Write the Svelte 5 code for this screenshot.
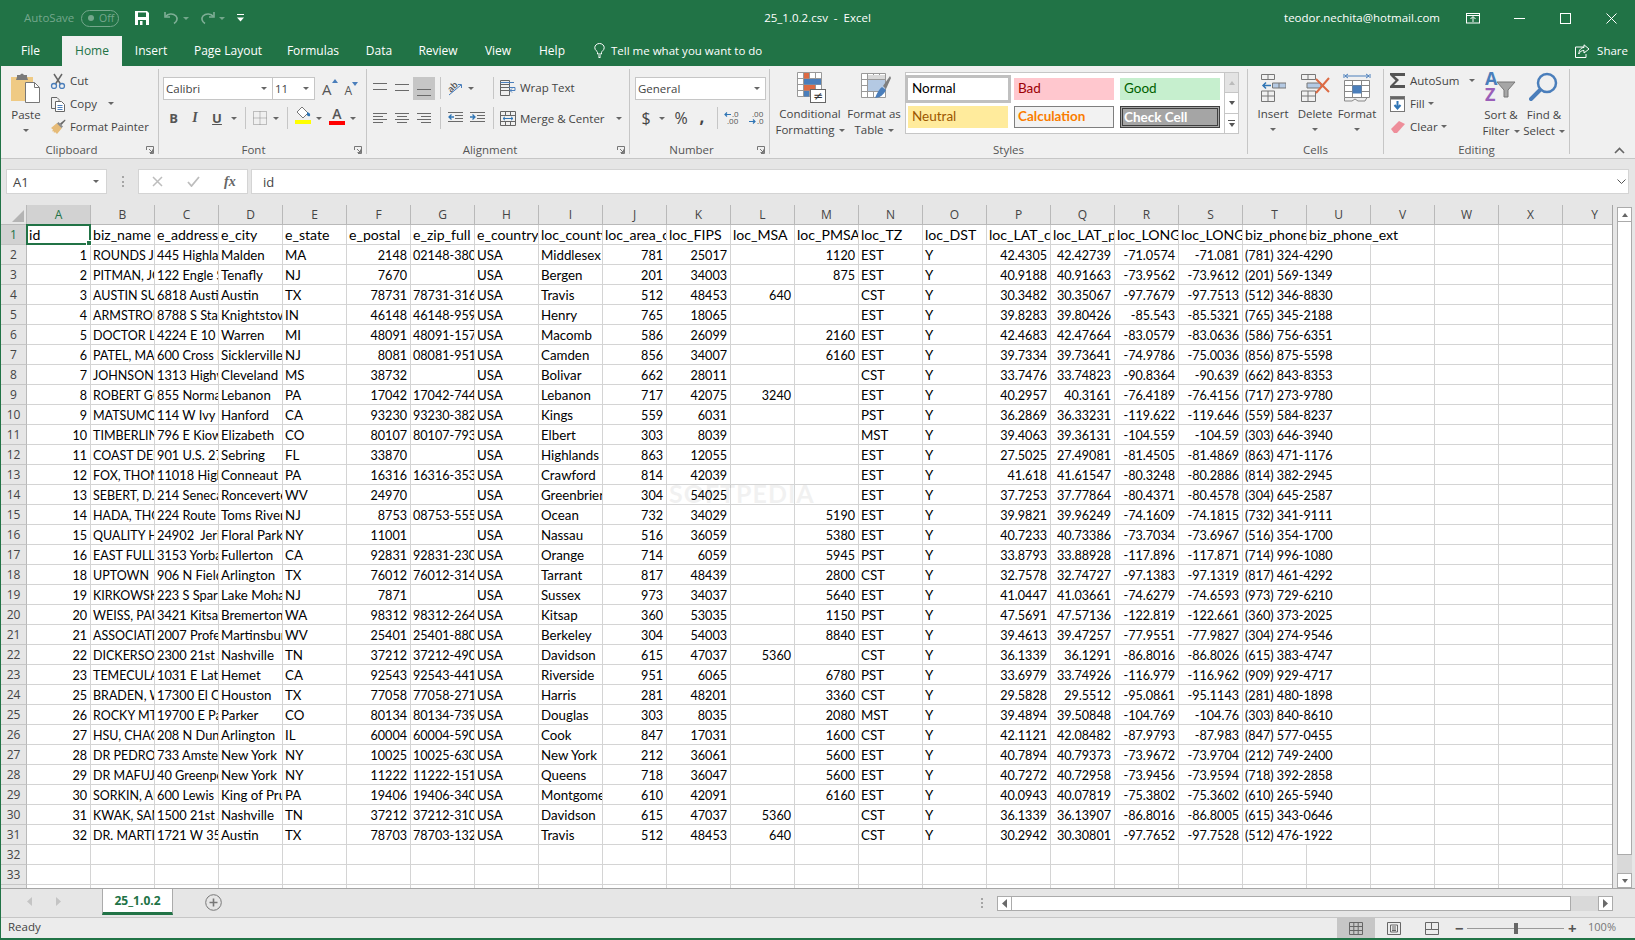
<script>
const tabs = [
  { l: 'File', w: 61, first: true }, { l: 'Home', w: 60, on: true }, { l: 'Insert', w: 58 }, { l: 'Page Layout', w: 96 },
  { l: 'Formulas', w: 74 }, { l: 'Data', w: 58 }, { l: 'Review', w: 60 }, { l: 'View', w: 60 }, { l: 'Help', w: 48 }
];
const letters = 'ABCDEFGHIJKLMNOPQRSTUVWXY'.split('');
const head = 'id|biz_name|e_address|e_city|e_state|e_postal|e_zip_full|e_country|loc_county|loc_area_code|loc_FIPS|loc_MSA|loc_PMSA|loc_TZ|loc_DST|loc_LAT_centroid|loc_LAT_poly|loc_LONG_centroid|loc_LONG_poly|biz_phone|biz_phone_ext'.split('|');
const raw = `1|ROUNDS JOHN|445 Highland|Malden|MA|2148|02148-3809|USA|Middlesex County|781|25017||1120|EST|Y|42.4305|42.42739|-71.0574|-71.081|(781) 324-4290
2|PITMAN, JOHN|122 Engle St|Tenafly|NJ|7670||USA|Bergen|201|34003||875|EST|Y|40.9188|40.91663|-73.9562|-73.9612|(201) 569-1349
3|AUSTIN SURGERY|6818 Austin Ctr|Austin|TX|78731|78731-3162|USA|Travis|512|48453|640||CST|Y|30.3482|30.35067|-97.7679|-97.7513|(512) 346-8830
4|ARMSTRONG|8788 S State Rd|Knightstown|IN|46148|46148-9590|USA|Henry|765|18065|||EST|Y|39.8283|39.80426|-85.543|-85.5321|(765) 345-2188
5|DOCTOR LEE|4224 E 10 Mile|Warren|MI|48091|48091-1572|USA|Macomb|586|26099||2160|EST|Y|42.4683|42.47664|-83.0579|-83.0636|(586) 756-6351
6|PATEL, MAHESH|600 Cross Keys|Sicklerville NJ|NJ|8081|08081-9514|USA|Camden|856|34007||6160|EST|Y|39.7334|39.73641|-74.9786|-75.0036|(856) 875-5598
7|JOHNSON EYE|1313 Highway|Cleveland|MS|38732||USA|Bolivar|662|28011|||CST|Y|33.7476|33.74823|-90.8364|-90.639|(662) 843-8353
8|ROBERT GOLD|855 Norman Dr|Lebanon|PA|17042|17042-7449|USA|Lebanon|717|42075|3240||EST|Y|40.2957|40.3161|-76.4189|-76.4156|(717) 273-9780
9|MATSUMOTO|114 W Ivy|Hanford|CA|93230|93230-3821|USA|Kings|559|6031|||PST|Y|36.2869|36.33231|-119.622|-119.646|(559) 584-8237
10|TIMBERLINE|796 E Kiowa|Elizabeth|CO|80107|80107-7930|USA|Elbert|303|8039|||MST|Y|39.4063|39.36131|-104.559|-104.59|(303) 646-3940
11|COAST DENTAL|901 U.S. 27 N|Sebring|FL|33870||USA|Highlands|863|12055|||EST|Y|27.5025|27.49081|-81.4505|-81.4869|(863) 471-1176
12|FOX, THOMAS|11018 Highland|Conneaut|PA|16316|16316-3531|USA|Crawford|814|42039|||EST|Y|41.618|41.61547|-80.3248|-80.2886|(814) 382-2945
13|SEBERT, D.W.|214 Seneca Tr|Ronceverte|WV|24970||USA|Greenbrier County|304|54025|||EST|Y|37.7253|37.77864|-80.4371|-80.4578|(304) 645-2587
14|HADA, THOMAS|224 Route 37|Toms River|NJ|8753|08753-5551|USA|Ocean|732|34029||5190|EST|Y|39.9821|39.96249|-74.1609|-74.1815|(732) 341-9111
15|QUALITY HOME|24902  Jericho|Floral Park|NY|11001||USA|Nassau|516|36059||5380|EST|Y|40.7233|40.73386|-73.7034|-73.6967|(516) 354-1700
16|EAST FULLERTON|3153 Yorba Rd|Fullerton|CA|92831|92831-2301|USA|Orange|714|6059||5945|PST|Y|33.8793|33.88928|-117.896|-117.871|(714) 996-1080
18|UPTOWN|906 N Field St|Arlington|TX|76012|76012-3140|USA|Tarrant|817|48439||2800|CST|Y|32.7578|32.74727|-97.1383|-97.1319|(817) 461-4292
19|KIRKOWSKI|223 S Sparta|Lake Mohawk|NJ|7871||USA|Sussex|973|34037||5640|EST|Y|41.0447|41.03661|-74.6279|-74.6593|(973) 729-6210
20|WEISS, PAUL|3421 Kitsap Way|Bremerton|WA|98312|98312-2645|USA|Kitsap|360|53035||1150|PST|Y|47.5691|47.57136|-122.819|-122.661|(360) 373-2025
21|ASSOCIATES|2007 Professional|Martinsburg|WV|25401|25401-8806|USA|Berkeley|304|54003||8840|EST|Y|39.4613|39.47257|-77.9551|-77.9827|(304) 274-9546
22|DICKERSON|2300 21st Ave|Nashville|TN|37212|37212-4901|USA|Davidson|615|47037|5360||CST|Y|36.1339|36.1291|-86.8016|-86.8026|(615) 383-4747
23|TEMECULA|1031 E Latham|Hemet|CA|92543|92543-4412|USA|Riverside|951|6065||6780|PST|Y|33.6979|33.74926|-116.979|-116.962|(909) 929-4717
25|BRADEN, WILL|17300 El Camino|Houston|TX|77058|77058-2710|USA|Harris|281|48201||3360|CST|Y|29.5828|29.5512|-95.0861|-95.1143|(281) 480-1898
26|ROCKY MTN|19700 E Parker|Parker|CO|80134|80134-7390|USA|Douglas|303|8035||2080|MST|Y|39.4894|39.50848|-104.769|-104.76|(303) 840-8610
27|HSU, CHAO|208 N Dunton|Arlington|IL|60004|60004-5901|USA|Cook|847|17031||1600|CST|Y|42.1121|42.08482|-87.9793|-87.983|(847) 577-0455
28|DR PEDRO|733 Amsterdam|New York|NY|10025|10025-6301|USA|New York|212|36061||5600|EST|Y|40.7894|40.79373|-73.9672|-73.9704|(212) 749-2400
29|DR MAFUJ|40 Greenpoint|New York|NY|11222|11222-1512|USA|Queens|718|36047||5600|EST|Y|40.7272|40.72958|-73.9456|-73.9594|(718) 392-2858
30|SORKIN, ALAN|600 Lewis Rd|King of Prussia|PA|19406|19406-3401|USA|Montgomery|610|42091||6160|EST|Y|40.0943|40.07819|-75.3802|-75.3602|(610) 265-5940
31|KWAK, SAMUEL|1500 21st Ave|Nashville|TN|37212|37212-3101|USA|Davidson|615|47037|5360||CST|Y|36.1339|36.13907|-86.8016|-86.8005|(615) 343-0646
32|DR. MARTIN|1721 W 35th St|Austin|TX|78703|78703-1321|USA|Travis|512|48453|640||CST|Y|30.2942|30.30801|-97.7652|-97.7528|(512) 476-1922`;
const rightCols = new Set([0, 5, 9, 10, 11, 12, 15, 16, 17, 18]);
const sizeCls = (i) => (i === 1 ? 'caps' : i === 2 ? 'mix' : i === 6 || i === 19 || rightCols.has(i) ? 'digits' : '');
const dataRows = raw.split('\n').map((s) => s.split('|'));
function fill(cells) {
  while (cells.length < 25) cells.push({ t: '', cls: '' });
  return cells;
}
const rows = [];
{
  const c = head.map((t, i) => ({ t, cls: 'hd' + (i === 20 ? ' span2' : '') }));
  c.push({ t: '', cls: '' }, { t: '', cls: '' }, { t: '', cls: '' });
  rows.push(c);
}
for (const r of dataRows) {
  const c = r.map((t, i) => ({ t, cls: sizeCls(i) + (rightCols.has(i) ? ' num' : '') + (i === 19 ? ' span2' : '') }));
  c.push({ t: '', cls: '' }, { t: '', cls: '' }, { t: '', cls: '' }, { t: '', cls: '' });
  rows.push(c);
}
for (let i = 0; i < 3; i++) rows.push(fill([]));
</script>

<div class="app">
  <header class="title">
    <div class="qat">
      <span class="autosave">AutoSave</span>
      <span class="toggle"><i></i><b>Off</b></span>
      <svg class="save" width="14" height="14" viewBox="0 0 14 14"><path d="M0 0H12L14 2V14H0Z" fill="#fff"/><rect x="3" y="1.5" width="8" height="4.5" fill="#217346"/><rect x="3" y="9" width="8" height="5" fill="#217346"/><rect x="5" y="10" width="2.5" height="4" fill="#fff"/></svg>
      <svg class="undo" width="15" height="14" viewBox="0 0 15 14" fill="none" stroke="#7fae96" stroke-width="1.6"><path d="M1 1V6H6"/><path d="M1.5 5.5C4 2.5 9 2 12 5C14 7.5 13 10.5 10 12.5"/></svg>
      <span class="dd dim"></span>
      <svg class="redo" width="15" height="14" viewBox="0 0 15 14" fill="none" stroke="#7fae96" stroke-width="1.6"><path d="M14 1V6H9"/><path d="M13.5 5.5C11 2.5 6 2 3 5C1 7.5 2 10.5 5 12.5"/></svg>
      <span class="dd dim"></span>
      <svg class="cust" width="7" height="8" viewBox="0 0 7 8"><rect width="7" height="1" fill="#fff"/><path d="M0 3.5H7L3.5 7.5Z" fill="#fff"/></svg>
    </div>
    <div class="doc">25_1.0.2.csv &nbsp;-&nbsp; Excel</div>
    <div class="winbox">
      <span class="email">teodor.nechita@hotmail.com</span>
      <span class="wb"><svg width="14" height="11" viewBox="0 0 14 11" fill="none" stroke="#fff"><rect x=".5" y=".5" width="13" height="9.5"/><path d="M.5 2.5H13.5M7 9V4M4.5 6L7 3.5L9.5 6"/></svg></span>
      <span class="wb"><svg width="11" height="1" viewBox="0 0 11 1"><rect width="11" height="1" fill="#fff"/></svg></span>
      <span class="wb"><svg width="11" height="11" viewBox="0 0 11 11" fill="none" stroke="#fff"><rect x=".5" y=".5" width="10" height="10"/></svg></span>
      <span class="wb"><svg width="11" height="11" viewBox="0 0 11 11" fill="none" stroke="#fff"><path d="M.5 .5L10.5 10.5M10.5 .5L.5 10.5"/></svg></span>
    </div>
  </header>

  <nav class="tabs">
    {#each tabs as t}
      <span class="tab" class:on={t.on} class:first={t.first} style="width:{t.w}px">{t.l}</span>
    {/each}
    <svg class="bulb" width="11" height="15" viewBox="0 0 11 15" fill="none" stroke="#fff"><path d="M3.5 11V9.5C3.5 8 .8 7.5 .8 4.7A4.7 4.2 0 0 1 10.2 4.7C10.2 7.5 7.5 8 7.5 9.5V11ZM4 13H7M4.5 14.5H6.5"/></svg>
    <span class="tell">Tell me what you want to do</span>
    <span class="share">
      <svg width="15" height="14" viewBox="0 0 15 14" fill="none" stroke="#fff"><path d="M9 3H.5V13.5H11V10"/><path d="M9 .8L14 5L9 9V6.5C6.5 6.5 5 7.5 3.8 10C4 6 6 3.5 9 3.5Z"/></svg>
      <span>Share</span>
    </span>
  </nav>

  <section class="ribbon">
    <!-- Clipboard -->
    <div class="group clip">
      <div class="body hflex">
        <div class="big paste">
          <svg width="29" height="30" viewBox="0 0 29 30"><rect x="0" y="4" width="22" height="24" fill="#efca84"/><path d="M6 4V2H9Q11 -1 13 2H16V4L17 7H5Z" fill="#7a7a7a"/><path d="M14.500 9.500H23.500L28.500 14.500V29.500H14.500Z" fill="#fff" stroke="#777"/><path d="M23.500 9.500V14.500H28.500" fill="none" stroke="#777"/></svg>
          <span class="lbl">Paste</span>
          <span class="dd"></span>
        </div>
        <div class="stack cstack">
          <div class="sm"><svg width="16" height="16" viewBox="0 0 16 16" fill="none"><path d="M4 1L10.500 11M12 1L5.500 11" stroke="#666" stroke-width="1.500"/><circle cx="4" cy="13" r="2.500" stroke="#4a7ebb" stroke-width="1.300"/><circle cx="12" cy="13" r="2.500" stroke="#4a7ebb" stroke-width="1.300"/></svg><span>Cut</span></div>
          <div class="sm"><svg width="16" height="16" viewBox="0 0 16 16" fill="none" stroke="#666"><path d="M1.500 1.500H7L9 3.500V5M5 12.500H1.500V1.500" /><path d="M5.500 5.500H11.500L14.500 8.500V15.500H5.500Z" fill="#fff"/><path d="M7.500 9.500H12.500M7.500 11.500H12.500M7.500 13.500H12.500" stroke="#4a7ebb"/></svg><span>Copy</span><span class="dd mlc"></span></div>
          <div class="sm"><svg width="16" height="16" viewBox="0 0 16 16"><path d="M1 9L7 4L12 9L7 15L5 13L4 14L3.500 12L2 12.500L3 10.500Z" fill="#e6bb78"/><path d="M7 4.500L11.500 9L13 7.500L8.500 3Z" fill="#8a8a8a"/><path d="M10 4.500L15 0.500L15.500 1.500L11.500 6Z" fill="#666"/></svg><span class="fp">Format Painter</span></div>
        </div>
      </div>
      <div class="glabel lc">Clipboard<svg class="launch" width="8" height="8" viewBox="0 0 8 8" fill="none" stroke="#777"><path d="M.5 4V.5H7.500V7.500H4M3 3L6.500 6.500M6.500 3.500V6.500H3.500"/></svg></div>
    </div>

    <!-- Font -->
    <div class="group font">
      <div class="body">
        <div class="r1">
          <div class="combo cfont"><span>Calibri</span><span class="dd"></span></div>
          <div class="combo csize"><span>11</span><span class="dd"></span></div>
          <span class="grow">A<svg width="6" height="4" viewBox="0 0 6 4"><path d="M0 4L3 0L6 4Z" fill="#4a7ebb"/></svg></span>
          <span class="shrink">A<svg width="6" height="4" viewBox="0 0 6 4"><path d="M0 0L3 4L6 0Z" fill="#4a7ebb"/></svg></span>
        </div>
        <div class="r2">
          <span class="ib w21 bb">B</span><span class="ib w22 ii">I</span><span class="ib w22 uu">U</span><span class="ib w12"><span class="dd"></span></span>
          <span class="vsep s5"></span>
          <span class="ib w20 ml4"><svg width="14" height="14" viewBox="0 0 14 14" fill="none" stroke="#8a8a8a" stroke-dasharray="1 1"><path d="M.5 .5H13.500V13.500H.5ZM7 .5V13.500M.5 7H13.500"/></svg></span><span class="ib w12"><span class="dd"></span></span>
          <span class="vsep s5"></span>
          <span class="ib w20 ml5 col"><svg width="16" height="12" viewBox="0 0 16 12"><path d="M7 0L13 6L8 11L2 5Z" fill="#fff" stroke="#777"/><path d="M12 5Q16 6 15 9Q13 10 12 8Z" fill="#2f75b5"/></svg><i class="bar yellow"></i></span><span class="ib w12"><span class="dd"></span></span>
          <span class="ib w20 ml2 col"><span class="colA">A</span><i class="bar red"></i></span><span class="ib w12"><span class="dd"></span></span>
        </div>
      </div>
      <div class="glabel lf">Font<svg class="launch" width="8" height="8" viewBox="0 0 8 8" fill="none" stroke="#777"><path d="M.5 4V.5H7.500V7.500H4M3 3L6.500 6.500M6.500 3.500V6.500H3.500"/></svg></div>
    </div>

    <!-- Alignment -->
    <div class="group align">
      <div class="body hflex">
        <div class="alignL">
          <div class="r1a">
            <span class="ib w22"><svg width="14" height="10" viewBox="0 0 14 10" stroke="#6a6a6a"><path d="M0 .5H14M0 6.500H14"/></svg></span>
            <span class="ib w22"><svg width="14" height="8" viewBox="0 0 14 8" stroke="#6a6a6a"><path d="M0 .5H14M0 6.500H14"/></svg></span>
            <span class="ib w22 sel"><svg class="dn" width="14" height="8" viewBox="0 0 14 8" stroke="#6a6a6a"><path d="M0 .5H14M0 6.500H14"/></svg></span>
            <span class="vsep s5"></span>
            <span class="ib w22 ml3"><svg width="18" height="17" viewBox="0 0 18 17" fill="none"><text x="2" y="10" class="ori" transform="rotate(-45 7 8)">ab</text><path d="M3 15L15 5M12 4.500L15.500 4.500L15.500 8" stroke="#4a7ebb"/></svg></span>
            <span class="ib w22 oridd"><span class="dd"></span></span>
            <span class="vsep s5"></span>
          </div>
          <div class="r2a">
            <span class="ib w22"><svg width="14" height="10" viewBox="0 0 14 10" stroke="#6a6a6a"><path d="M0 .5H14M0 3.500H10M0 6.500H14M0 9.500H10"/></svg></span>
            <span class="ib w22"><svg width="14" height="10" viewBox="0 0 14 10" stroke="#6a6a6a"><path d="M0 .5H14M2 3.500H12M0 6.500H14M2 9.500H12"/></svg></span>
            <span class="ib w22"><svg width="14" height="10" viewBox="0 0 14 10" stroke="#6a6a6a"><path d="M0 .5H14M4 3.500H14M0 6.500H14M4 9.500H14"/></svg></span>
            <span class="vsep s5"></span>
            <span class="ib w22 ml3"><svg width="15" height="12" viewBox="0 0 15 12" fill="none" stroke="#6a6a6a"><path d="M0 .5H15M7 3.500H15M7 6.500H15M0 9.500H15"/><path d="M6 5H1M3.500 2.500L1 5L3.500 7.500" stroke="#2f75b5" stroke-width="1.300"/></svg></span>
            <span class="ib w22"><svg width="15" height="12" viewBox="0 0 15 12" fill="none" stroke="#6a6a6a"><path d="M0 .5H15M7 3.500H15M7 6.500H15M0 9.500H15"/><path d="M0 5H5M2.500 2.500L5 5L2.500 7.500" stroke="#2f75b5" stroke-width="1.300"/></svg></span>
            <span class="vsep s5"></span>
          </div>
        </div>
        <div class="alignR">
          <div class="sm wrap"><svg width="16" height="16" viewBox="0 0 16 16" fill="none" stroke="#666"><path d="M.5 .5H9.500V15.500H.5ZM.5 4.500H9.500M.5 7.500H9.500M.5 10.500H9.500" /><path d="M.5 2.500H14M9 7.500H15V10.500H10M12 8.500L10 10.500L12 12.500" stroke="#4a7ebb"/></svg><span>Wrap Text</span></div>
          <div class="sm merge"><svg width="16" height="15" viewBox="0 0 16 15" fill="none" stroke="#666"><path d="M.5 .5H15.500V14.500H.5ZM.5 4.500H15.500M.5 10.500H15.500M5.500 .5V4.500M10.500 .5V4.500M5.500 10.500V14.500M10.500 10.500V14.500"/><path d="M3 7.500H13M5 5.800L3 7.500L5 9.200M11 5.800L13 7.500L11 9.200" stroke="#2f75b5"/></svg><span>Merge &amp; Center</span><span class="dd mlm"></span></div>
        </div>
      </div>
      <div class="glabel la">Alignment<svg class="launch" width="8" height="8" viewBox="0 0 8 8" fill="none" stroke="#777"><path d="M.5 4V.5H7.500V7.500H4M3 3L6.500 6.500M6.500 3.500V6.500H3.500"/></svg></div>
    </div>

    <!-- Number -->
    <div class="group number">
      <div class="body">
        <div class="combo cnum"><span>General</span><span class="dd"></span></div>
        <div class="r2">
          <span class="ib w22 dollar">$</span><span class="ib w10"><span class="dd"></span></span>
          <span class="ib w22 ml3 pct">%</span><span class="ib w20 comma">,</span>
          <span class="vsep s4"></span>
          <span class="ib w22 ml3"><svg width="16" height="14" viewBox="0 0 16 14"><path d="M1 3.500H7M3 1.500L1 3.500L3 5.500" fill="none" stroke="#2f75b5" stroke-width="1.200"/><text x="8" y="6" class="dec">.0</text><text x="3" y="13" class="dec">.00</text></svg></span>
          <span class="ib w22 ml2"><svg width="16" height="14" viewBox="0 0 16 14"><text x="4" y="6" class="dec">.00</text><path d="M1 10.500H7M5 8.500L7 10.500L5 12.500" fill="none" stroke="#2f75b5" stroke-width="1.200"/><text x="9" y="13" class="dec">.0</text></svg></span>
        </div>
      </div>
      <div class="glabel ln">Number<svg class="launch" width="8" height="8" viewBox="0 0 8 8" fill="none" stroke="#777"><path d="M.5 4V.5H7.500V7.500H4M3 3L6.500 6.500M6.500 3.500V6.500H3.500"/></svg></div>
    </div>

    <!-- Styles -->
    <div class="group styles">
      <div class="body hflex">
        <div class="big cf">
          <svg width="30" height="31" viewBox="0 0 30 31"><path d="M.5 .5H24.500V24.500H.5ZM.5 6.500H24.500M.5 12.500H24.500M.5 18.500H24.500M6.500 .5V24.500M12.500 .5V24.500M18.500 .5V24.500" fill="#fff" stroke="#999"/><rect x="7" y="1" width="5" height="5.500" fill="#dd6b44"/><rect x="7" y="7" width="17" height="5.500" fill="#4a7ebb"/><rect x="7" y="13" width="11" height="5.500" fill="#dd6b44"/><rect x="7" y="19" width="5" height="5.500" fill="#4a7ebb"/><rect x="13.500" y="17.500" width="15" height="13" fill="#fff" stroke="#666"/><text x="21" y="28" class="ne">≠</text></svg>
          <span class="lbl">Conditional</span>
          <span class="lbl">Formatting<span class="dd mls"></span></span>
        </div>
        <div class="big ft">
          <svg width="30" height="31" viewBox="0 0 30 31"><path d="M.5 1.500H24.500V25.500H.5ZM.5 7.500H24.500M.5 13.500H24.500M.5 19.500H24.500M6.500 1.500V25.500M12.500 1.500V25.500M18.500 1.500V25.500" fill="#fff" stroke="#999"/><rect x="7" y="8" width="17" height="11" fill="#b4c9e3"/><path d="M7 3H24V7H7Z" fill="#d9d9d9"/><path d="M22 14L29 4L30 6L25 17Z" fill="#7f7f7f"/><path d="M21 15L25 18Q22 25 14 26Q17 18 21 15Z" fill="#4a7ebb"/></svg>
          <span class="lbl">Format as</span>
          <span class="lbl">Table<span class="dd mls"></span></span>
        </div>
        <div class="gallery">
          <span class="st normal">Normal</span><span class="st bad">Bad</span><span class="st good">Good</span>
          <span class="st neutral">Neutral</span><span class="st calc">Calculation</span><span class="st check">Check Cell</span>
        </div>
        <div class="gscroll">
          <span class="gs up"><span class="ua"></span></span>
          <span class="gs"><span class="dd"></span></span>
          <span class="gs more"><i></i><span class="dd"></span></span>
        </div>
      </div>
      <div class="glabel">Styles</div>
    </div>

    <!-- Cells -->
    <div class="group cells">
      <div class="body hflex">
        <div class="big cb">
          <svg width="26" height="28" viewBox="0 0 26 28" fill="none" stroke="#777"><path d="M1.500 .5H14.500V5.500H1.500ZM8 .5V5.500"/><path d="M12.500 9H26V14H12.500ZM19 9V14" fill="#b4c9e3"/><path d="M11 11.500H3M6 8.500L3 11.500L6 14.500" stroke="#2f75b5" stroke-width="1.500"/><path d="M1.500 17H14.500V27.500H1.500ZM8 17V27.500M1.500 22H14.500"/></svg>
          <span class="lbl">Insert</span>
          <span class="dd"></span>
        </div>
        <div class="big cb">
          <svg width="30" height="28" viewBox="0 0 30 28" fill="none" stroke="#777"><path d="M1.500 .5H15.500V5.500H1.500ZM8 .5V5.500"/><path d="M7 9H21V14H7Z" fill="#b4c9e3"/><path d="M1.500 17H15.500V27.500H1.500ZM8 17V27.500M1.500 22H15.500"/><path d="M16 5L29 18M29 4L16 19" stroke="#dd6b44" stroke-width="2"/></svg>
          <span class="lbl">Delete</span>
          <span class="dd"></span>
        </div>
        <div class="big cb">
          <svg width="28" height="30" viewBox="0 0 28 30" fill="none" stroke="#888"><path d="M1 1V5M27 1V5M2 3H26M5 1L2 3L5 5M23 1L26 3L23 5" stroke="#4a7ebb"/><path d="M1.500 7.500H26.500V24.500H1.500ZM1.500 12.500H26.500M1.500 18.500H26.500M9.500 7.500V24.500M18.500 7.500V24.500" fill="#fff"/><rect x="9.500" y="12.500" width="9" height="8" fill="#4a7ebb" stroke="none"/><path d="M1.500 24.500V28H9L12 26L15 28H22L24 24.500"/></svg>
          <span class="lbl">Format</span>
          <span class="dd"></span>
        </div>
      </div>
      <div class="glabel">Cells</div>
    </div>

    <!-- Editing -->
    <div class="group editing">
      <div class="body hflex">
        <div class="stack edstack">
          <div class="sm"><svg width="16" height="15" viewBox="0 0 16 15" fill="#555"><path d="M0 0H15V3H4.500L9 7L4 12H15V15H0V13L5.500 7.500L0 2Z"/></svg><span>AutoSum</span><span class="dd mla"></span></div>
          <div class="sm"><svg width="16" height="16" viewBox="0 0 16 16" fill="none"><rect x=".5" y=".5" width="14" height="15" fill="#fff" stroke="#777"/><rect x="1" y="1" width="13" height="2.500" fill="#666"/><path d="M7.500 5V12M4.500 9L7.500 12.500L10.500 9" stroke="#2f75b5" stroke-width="2"/></svg><span>Fill</span><span class="dd mlf"></span></div>
          <div class="sm"><svg width="16" height="14" viewBox="0 0 16 14"><path d="M1 9L9 1L15 4L7 13H4Z" fill="#ee8e9a"/></svg><span>Clear</span><span class="dd mlf"></span></div>
        </div>
        <div class="big sf">
          <svg width="32" height="30" viewBox="0 0 32 30"><text x="0" y="13" class="az a">A</text><text x="0" y="29" class="az z">Z</text><path d="M12 10H30L23 18V25H19V18Z" fill="#a6a6a6" stroke="#777"/></svg>
          <span class="lbl">Sort &amp;</span>
          <span class="lbl">Filter<span class="dd mls"></span></span>
        </div>
        <div class="big fs">
          <svg width="30" height="30" viewBox="0 0 30 30" fill="none"><circle cx="18" cy="11" r="9" stroke="#4a7ebb" stroke-width="2.500"/><path d="M11 18L2 27" stroke="#4a7ebb" stroke-width="4" stroke-linecap="round"/></svg>
          <span class="lbl">Find &amp;</span>
          <span class="lbl">Select<span class="dd mls"></span></span>
        </div>
      </div>
      <div class="glabel">Editing</div>
    </div>

    <div class="collapse"><svg width="11" height="7" viewBox="0 0 11 7" fill="none" stroke="#666" stroke-width="1.600"><path d="M1 6L5.500 1.500L10 6"/></svg></div>
  </section>

  <section class="fbar">
    <div class="namebox"><span>A1</span><span class="dd"></span></div>
    <div class="fdots"></div>
    <div class="fbtns">
      <svg width="11" height="11" viewBox="0 0 11 11" stroke="#bdbdbd" stroke-width="1.500"><path d="M1 1L10 10M10 1L1 10"/></svg>
      <svg width="13" height="11" viewBox="0 0 13 11" fill="none" stroke="#bdbdbd" stroke-width="1.800"><path d="M1 6L4.500 10L12 1"/></svg>
      <span class="fx">fx</span>
    </div>
    <div class="finput"><span>id</span><svg width="9" height="5" viewBox="0 0 9 5" fill="none" stroke="#555"><path d="M.5 .5L4.500 4.500L8.500 .5"/></svg></div>
  </section>

  <section class="sheet">
    <div class="gridclip">
      <div class="grid">
        <div class="corner"><i></i></div>
        {#each letters as l, i}
          <div class="ch" class:active={i === 0}>{l}</div>
        {/each}
        {#each rows as r, ri}
          <div class="rh" class:active={ri === 0}>{ri + 1}</div>
          {#each r as c, ci}
            <div class="cell {c.cls}">{c.t}{#if ri === 0 && ci === 0}<i class="selbox"><b></b></i>{/if}</div>
          {/each}
        {/each}
        <div class="rh">34</div>
      </div>
      <div class="watermark">SOFTPEDIA</div>
    </div>
    <div class="vscroll">
      <span class="sbtn"><span class="ua"></span></span>
      <span class="vthumb"></span>
      <span class="vtrack"></span>
      <span class="sbtn"><span class="dd"></span></span>
    </div>
  </section>

  <section class="sheetbar">
    <span class="nav"><svg width="5" height="9" viewBox="0 0 5 9"><path d="M5 0L0 4.500L5 9Z" fill="#c4c4c4"/></svg></span>
    <span class="nav"><svg width="5" height="9" viewBox="0 0 5 9"><path d="M0 0L5 4.500L0 9Z" fill="#c4c4c4"/></svg></span>
    <span class="stab">25_1.0.2</span>
    <svg class="addsheet" width="17" height="17" viewBox="0 0 17 17" fill="none" stroke="#777"><circle cx="8.500" cy="8.500" r="7.800"/><path d="M8.500 4.500V12.500M4.500 8.500H12.500" stroke-width="1.600"/></svg>
    <span class="bdots"></span>
    <div class="hscroll">
      <span class="hbtn"><svg width="5" height="9" viewBox="0 0 5 9"><path d="M5 0L0 4.500L5 9Z" fill="#6a6a6a"/></svg></span>
      <span class="hthumb"></span>
      <span class="htrack"></span>
      <span class="hbtn"><svg width="5" height="9" viewBox="0 0 5 9"><path d="M0 0L5 4.500L0 9Z" fill="#6a6a6a"/></svg></span>
    </div>
  </section>

  <footer class="status">
    <span class="ready">Ready</span>
    <div class="views">
      <span class="vb on"><svg width="14" height="13" viewBox="0 0 14 13" fill="none" stroke="#666"><path d="M.5 .5H13.500V12.500H.5ZM.5 4.500H13.500M.5 8.500H13.500M4.800 .5V12.500M9.200 .5V12.500"/></svg></span>
      <span class="vb"><svg width="14" height="13" viewBox="0 0 14 13" fill="none" stroke="#666"><path d="M.5 .5H13.500V12.500H.5ZM3.500 3H10.500V10H3.500ZM5 5H9M5 7H9M5 8.500H9"/></svg></span>
      <span class="vb"><svg width="14" height="13" viewBox="0 0 14 13" fill="none" stroke="#666"><path d="M.5 .5H13.500V12.500H.5ZM.5 7.500H6.500V.5M6.500 7.500H13.500"/></svg></span>
    </div>
    <div class="zoom">
      <span class="zm">−</span>
      <span class="ztrack"><i></i></span>
      <span class="zm">+</span>
      <span class="zpct">100%</span>
    </div>
  </footer>
</div>

<style>
:global(html), :global(body) { height: 940px; overflow: hidden; }
:global(body) { margin: 0; background: #e6e6e6; }
:global(*) { box-sizing: border-box; }
.app {
  width: 1635px; height: 940px; overflow: hidden; display: flex; flex-direction: column;
  border-left: 1px solid #217346; border-bottom: 2px solid #217346;
  font-family: "Open Sans", "Noto Sans", sans-serif; font-size: 11.5px; color: #444; background: #e6e6e6;
}
svg { display: block; flex: none; }

/* title */
.title { height: 36px; flex: none; background: #217346; color: #fff; display: grid; grid-template-columns: 1fr auto 1fr; align-items: center; margin-left: -1px; }
.qat { display: flex; align-items: center; padding-left: 24px; }
.autosave { color: #74a78c; width: 57px; margin-top: -1px; }
.toggle { width: 38px; height: 17px; border: 1px solid #74a78c; border-radius: 9px; display: flex; align-items: center; padding-left: 6px; color: #74a78c; gap: 5px; font-size: 10.5px; }
.toggle i { width: 6px; height: 6px; border-radius: 50%; background: #74a78c; }
.toggle b { font-weight: 400; }
.save { margin-left: 16px; }
.undo { margin-left: 15px; }
.redo { margin-left: 11px; }
.dd { display: inline-block; flex: none; width: 0; height: 0; border-left: 3px solid transparent; border-right: 3px solid transparent; border-top: 3px solid #666; }
.dd.dim { border-top-color: #74a78c; margin-left: 4px; }
.cust { margin-left: 12px; }
.doc { font-size: 11.5px; white-space: nowrap; margin-top: -2px; }
.winbox { display: flex; align-items: center; justify-content: flex-end; height: 36px; padding-right: 1px; }
.email { margin-right: 10px; font-size: 11.5px; margin-top: -2px; }
.wb { width: 46px; height: 36px; display: flex; align-items: center; justify-content: center; }

/* tabs */
.tabs { height: 30px; flex: none; background: #217346; color: #fff; display: flex; align-items: center; font-size: 12px; position: relative; }
.tab { height: 30px; display: flex; align-items: center; justify-content: center; flex: none; padding-bottom: 2px; }
.tab.first { padding-right: 2px; }
.tab.on { background: #f0f0f0; color: #217346; }
.bulb { margin-left: 18px; margin-top: -1px; }
.tell { margin-left: 6px; font-size: 11.5px; margin-top: -2px; }
.share { margin-left: auto; margin-right: 7px; display: flex; align-items: center; gap: 7px; font-size: 11.5px; }
.share span { margin-top: -2px; }

/* ribbon */
.ribbon { height: 93px; flex: none; background: #f0f0f0; border-bottom: 1px solid #c6c6c6; display: flex; padding-top: 3px; position: relative; }
.group { flex: none; height: 85px; border-right: 1px solid #c6c6c6; display: flex; flex-direction: column; position: relative; }
.body { height: 71px; flex: none; }
.hflex { display: flex; }
.glabel { height: 20px; line-height: 20px; text-align: center; color: #555; position: relative; margin-bottom: -6px; }
.lc { padding-right: 16px; }
.lf { padding-right: 18px; margin-left: -4px; }
.la { padding-right: 16px; }
.ln { padding-right: 16px; margin-left: -5px; }
.launch { position: absolute; right: 4px; top: 6px; }
.clip { width: 158px; }
.font { width: 208px; padding-left: 4px; }
.align { width: 263px; }
.number { width: 140px; padding-left: 5px; }
.styles { width: 478px; }
.cells { width: 136px; }
.editing { width: 186px; }
.big { display: flex; flex-direction: column; align-items: center; flex: none; }
.lbl { height: 16px; line-height: 16px; white-space: nowrap; }
.paste { width: 50px; padding-top: 4px; }
.paste svg { margin-bottom: 4px; margin-left: -1px; }
.paste .dd { margin-top: 6px; }
.stack { display: flex; flex-direction: column; }
.cstack { margin-left: -1px; }
.sm { height: 23px; display: flex; align-items: center; gap: 4px; white-space: nowrap; }
.fp { font-size: 11.3px; }
.mlc { margin-left: 7px; }
.r1 { display: flex; align-items: center; padding-top: 8px; }
.combo { height: 23px; background: #fff; border: 1px solid #c6c6c6; display: flex; align-items: center; justify-content: space-between; padding: 0 5px 0 2px; flex: none; font-size: 11.5px; }
.cfont { width: 110px; }
.csize { width: 43px; margin-left: -1px; }
.grow { margin-left: 7px; width: 23px; font-size: 15px; display: flex; align-items: flex-start; color: #555; }
.shrink { width: 22px; font-size: 12px; display: flex; align-items: flex-start; color: #555; margin-top: 3px; }
.r2 { display: flex; align-items: center; height: 22px; margin-top: 7px; }
.ib { flex: none; height: 22px; display: inline-flex; align-items: center; justify-content: center; }
.w10 { width: 10px; } .w12 { width: 12px; } .w20 { width: 20px; } .w21 { width: 21px; } .w22 { width: 22px; }
.ml2 { margin-left: 2px; } .ml3 { margin-left: 3px; } .ml4 { margin-left: 4px; } .ml5 { margin-left: 5px; }
.bb { font-weight: 700; font-size: 13px; color: #555; }
.ii { font-style: italic; font-family: "Liberation Serif", serif; font-weight: 700; font-size: 14px; color: #555; }
.uu { font-weight: 700; font-size: 13px; color: #555; text-decoration: underline; }
.vsep { flex: none; width: 1px; height: 22px; background: #c6c6c6; }
.s5 { margin-left: 5px; } .s4 { margin-left: 5px; }
.col { flex-direction: column; justify-content: flex-start; }
.bar { display: block; width: 16px; height: 4px; margin-top: 1px; }
.yellow { background: #ffff00; } .red { background: #ff0000; }
.colA { font-size: 14px; line-height: 13px; font-weight: 600; color: #555; }

/* alignment */
.alignL { width: 127px; padding-left: 2px; flex: none; }
.r1a { display: flex; margin-top: 8px; }
.r2a { display: flex; margin-top: 7px; }
.sel { background: #c6c6c6; height: 23px; }
.sel .dn { margin-top: 8px; }
.ori { font-size: 9px; fill: #555; font-family: "Open Sans", sans-serif; font-weight: 600; }
.oridd { justify-content: flex-start; padding-left: 2px; }
.alignR { padding-left: 6px; }
.wrap { margin-top: 7px; }
.merge { margin-top: 8px; }
.mlm { margin-left: 7px; }

/* number */
.cnum { width: 131px; margin-top: 8px; }
.dollar { font-size: 16px; }
.pct { font-size: 16px; }
.comma { font-size: 17px; font-weight: 700; padding-bottom: 3px; }
.dec { font-size: 8px; fill: #555; font-family: "Open Sans", sans-serif; }
.ne { font-size: 12px; fill: #333; text-anchor: middle; font-family: "DejaVu Sans", sans-serif; }

/* styles */
.cf { width: 66px; margin-left: 7px; padding-top: 3px; }
.ft { width: 62px; padding-top: 3px; }
.cf svg, .ft svg { margin-bottom: 3px; margin-left: 3px; }
.mls { margin-left: 4px; vertical-align: middle; }
.gallery { margin-top: 3px; width: 320px; height: 62px; background: #fff; border: 1px solid #c6c6c6; padding: 5px 0 0 2px; display: grid; grid-template-columns: repeat(3, 100px); grid-auto-rows: 22px; column-gap: 6px; row-gap: 6px; flex: none; }
.st { font-family: Lato, sans-serif; font-size: 13.5px; line-height: 20px; padding-left: 4px; color: #000; white-space: nowrap; overflow: hidden; }
.normal { box-shadow: 0 0 0 3px #c0c0c0; }
.bad { background: #ffc7ce; color: #9c0006; }
.good { background: #c6efce; color: #006100; }
.neutral { background: #ffeb9c; color: #9c5700; }
.calc { background: #f2f2f2; color: #fa7d00; font-weight: 700; border: 1px solid #7f7f7f; line-height: 19px; padding-left: 3px; }
.check { background: #a5a5a5; color: #fff; font-weight: 700; border: 3px double #3f3f3f; line-height: 17px; padding-left: 1px; }
.gscroll { margin-top: 3px; width: 14px; height: 62px; display: flex; flex-direction: column; flex: none; }
.gs { flex: 1; background: #fff; border: 1px solid #c6c6c6; border-left: 0; display: flex; flex-direction: column; align-items: center; justify-content: center; gap: 2px; }
.gs + .gs { border-top: 0; }
.up { background: #e3e3e3; }
.ua { width: 0; height: 0; border-left: 3.500px solid transparent; border-right: 3.500px solid transparent; border-bottom: 4px solid #666; display: block; }
.up .ua { border-bottom-color: #bbb; }
.gs .dd { border-top-color: #555; border-left-width: 3.500px; border-right-width: 3.500px; border-top-width: 4px; }
.more i { width: 7px; height: 1px; background: #555; }

/* cells */
.cells .body { padding-left: 4px; }
.cb { width: 42px; padding-top: 4px; height: 71px; }
.cb svg { height: 30px; margin-bottom: 3px; }
.cb .dd { margin-top: 6px; }

/* editing */
.edstack { margin-left: 6px; width: 89px; flex: none; }
.mla { margin-left: 6px; }
.mlf { margin-left: -1px; }
.sf { width: 44px; padding-top: 3px; }
.fs { width: 42px; padding-top: 3px; }
.sf svg, .fs svg { margin-bottom: 5px; }
.az { font-size: 18px; font-weight: 700; font-family: "Open Sans", sans-serif; }
.a { fill: #4a7ebb; } .z { fill: #9a5fb8; }
.collapse { position: absolute; right: 10px; bottom: 4px; }

/* formula bar */
.fbar { height: 46px; flex: none; display: flex; align-items: flex-start; padding: 10px 6px 0 5px; }
.namebox { width: 101px; height: 25px; background: #fff; border: 1px solid #d4d4d4; display: flex; align-items: center; justify-content: space-between; padding: 0 7px 0 6px; font-family: "Open Sans", sans-serif; font-size: 13px; }
.fdots { width: 3px; height: 11px; margin: 7px 13px 0 15px; border-left: 2px dotted #a5a5a5; flex: none; }
.fbtns { width: 110px; height: 25px; background: #fff; border: 1px solid #d4d4d4; display: flex; align-items: center; gap: 24px; padding: 0 0 0 13px; flex: none; }
.fx { font-family: "Liberation Serif", serif; font-style: italic; font-weight: 700; font-size: 14px; color: #666; }
.finput { margin-left: 3px; flex: 1; height: 25px; background: #fff; border: 1px solid #d4d4d4; display: flex; align-items: center; justify-content: space-between; padding: 0 2px 0 11px; font-family: "Open Sans", sans-serif; font-size: 13px; }

/* sheet */
.sheet { height: 684px; flex: none; display: flex; border-bottom: 1px solid #a5a5a5; }
.gridclip { width: 1612px; height: 683px; overflow: hidden; position: relative; flex: none; border-right: 1px solid #a5a5a5; background: #fff; }
.grid { display: grid; grid-template-columns: 26px repeat(25, 64px); grid-auto-rows: 20px; width: 1626px; font-family: Lato, sans-serif; font-size: 13.3px; color: #000; background: #fff; }
.corner { background: #e6e6e6; border-right: 1px solid #b9b9b9; border-bottom: 1px solid #b9b9b9; position: relative; }
.corner i { position: absolute; right: 2px; bottom: 2px; width: 0; height: 0; border-left: 12px solid transparent; border-bottom: 12px solid #b4b4b4; }
.ch { background: #e6e6e6; border-right: 1px solid #b9b9b9; border-bottom: 1px solid #b9b9b9; text-align: center; line-height: 20px; color: #444; font-family: "Open Sans", sans-serif; font-size: 12px; }
.ch.active { background: #d2d2d2; color: #217346; }
.rh { background: #e6e6e6; border-right: 1px solid #b9b9b9; border-bottom: 1px solid #c6c6c6; text-align: center; line-height: 20px; color: #444; font-family: "Open Sans", sans-serif; font-size: 12px; }
.rh.active { background: #d2d2d2; color: #217346; }
.cell { border-right: 1px solid #d4d4d4; border-bottom: 1px solid #d4d4d4; padding: 0 1px 0 2px; line-height: 20px; white-space: pre; overflow: hidden; position: relative; }
.hd { font-size: 14.1px; }
.caps { font-size: 12.5px; line-height: 21px; }
.mix { font-size: 12.8px; line-height: 21px; }
.digits { font-size: 12.6px; line-height: 21px; }
.num { text-align: right; padding-right: 3px; }
.span2 { grid-column: span 2; }
.cell:has(.selbox) { overflow: visible; z-index: 2; }
.selbox { position: absolute; left: -1px; top: -1px; right: -1px; bottom: -1px; border: 2px solid #217346; }
.selbox b { position: absolute; right: -3px; bottom: -3px; width: 6px; height: 6px; background: #217346; border: 1px solid #fff; }
.watermark { position: absolute; left: 668px; top: 273px; font-family: Lato, sans-serif; font-size: 25px; font-weight: 700; letter-spacing: 1px; color: #000; opacity: .05; pointer-events: none; }
.vscroll { margin-left: 4px; width: 15px; display: flex; flex-direction: column; height: 683px; padding-top: 2px; }
.sbtn { height: 15px; flex: none; background: #fff; border: 1px solid #ababab; display: flex; align-items: center; justify-content: center; }
.sbtn .dd { border-top-color: #666; border-left-width: 3.500px; border-right-width: 3.500px; border-top-width: 4px; }
.vthumb { height: 633px; flex: none; background: #fff; border: 1px solid #ababab; border-top: 0; }
.vtrack { flex: 1; background: #d9d9d9; }

/* sheet bar */
.sheetbar { height: 28px; flex: none; display: flex; align-items: flex-start; position: relative; }
.nav { width: 29px; height: 25px; display: flex; align-items: center; justify-content: center; flex: none; }
.nav:first-child { margin-left: 14px; }
.stab { margin-left: 29px; width: 71px; height: 26px; background: #fff; border: 1px solid #ababab; border-top: 0; border-bottom: 3px solid #217346; color: #217346; font-weight: 700; font-size: 12px; text-align: center; line-height: 23px; flex: none; }
.addsheet { margin: 5px 0 0 32px; }
.bdots { margin: 9px 0 0 759px; width: 2px; height: 10px; border-left: 2px dotted #a5a5a5; flex: none; }
.hscroll { margin-left: 14px; margin-top: 7px; width: 616px; height: 15px; display: flex; flex: none; }
.hbtn { width: 15px; height: 15px; background: #fff; border: 1px solid #ababab; display: flex; align-items: center; justify-content: center; flex: none; }
.hthumb { width: 559px; background: #fff; border: 1px solid #ababab; border-left: 0; flex: none; }
.htrack { flex: 1; background: #d9d9d9; }

/* status */
.status { height: 21px; flex: none; display: flex; align-items: center; border-top: 1px solid #c6c6c6; background: #ececec; }
.ready { margin-left: 7px; margin-top: -3px; }
.views { margin-left: auto; display: flex; height: 20px; }
.vb { width: 38px; height: 20px; display: flex; align-items: center; justify-content: center; }
.vb.on { background: #c6c6c6; }
.zoom { display: flex; align-items: center; margin-left: 4px; margin-right: 19px; }
.zm { font-size: 15px; font-weight: 700; width: 8px; text-align: center; color: #555; line-height: 14px; }
.ztrack { width: 97px; height: 1px; background: #9a9a9a; margin: 0 4px; position: relative; }
.ztrack i { position: absolute; left: 47px; top: -5px; width: 4px; height: 11px; background: #666; }
.zpct { margin-left: 12px; margin-top: -3px; color: #777; font-size: 11px; }
</style>
